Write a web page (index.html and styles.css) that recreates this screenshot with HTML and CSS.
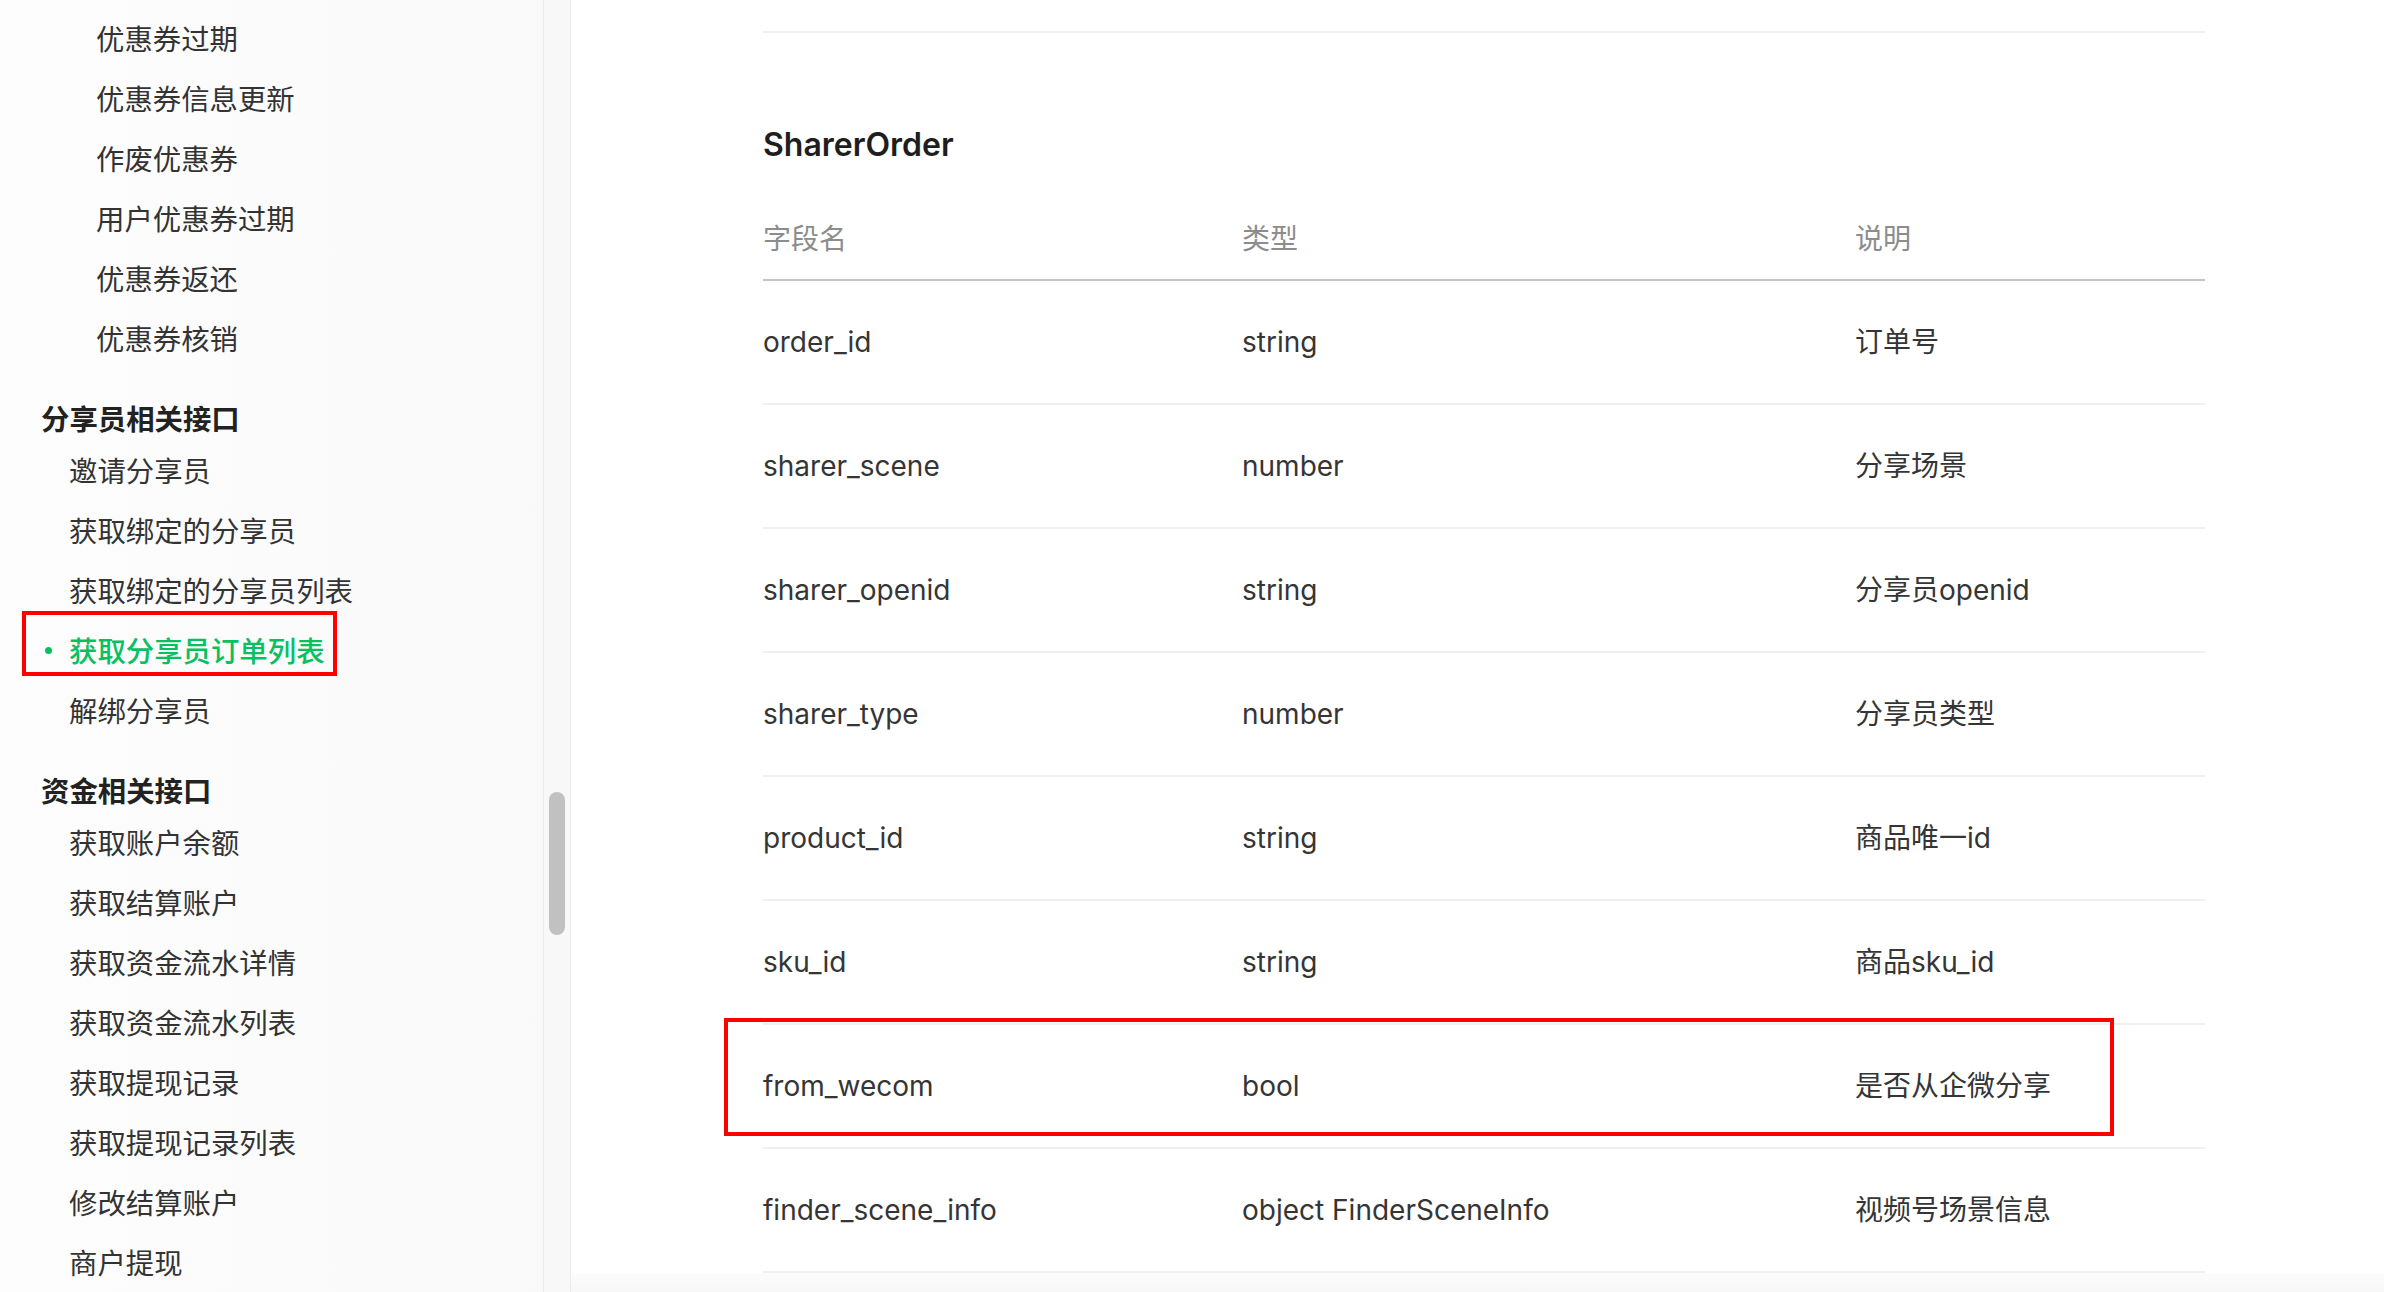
FILE: index.html
```html
<!DOCTYPE html>
<html lang="zh-CN">
<head>
<meta charset="utf-8">
<title>SharerOrder</title>
<link rel="stylesheet" href="styles.css">
</head>
<body>
<div class="page">
  <aside class="sidebar">
    <ul class="nav">
      <li class="nav-item lvl3">优惠券过期</li>
      <li class="nav-item lvl3">优惠券信息更新</li>
      <li class="nav-item lvl3">作废优惠券</li>
      <li class="nav-item lvl3">用户优惠券过期</li>
      <li class="nav-item lvl3">优惠券返还</li>
      <li class="nav-item lvl3">优惠券核销</li>
      <li class="nav-group">分享员相关接口</li>
      <li class="nav-item lvl2">邀请分享员</li>
      <li class="nav-item lvl2">获取绑定的分享员</li>
      <li class="nav-item lvl2">获取绑定的分享员列表</li>
      <li class="nav-item lvl2 active">获取分享员订单列表<span class="mark mark-nav"></span></li>
      <li class="nav-item lvl2">解绑分享员</li>
      <li class="nav-group">资金相关接口</li>
      <li class="nav-item lvl2">获取账户余额</li>
      <li class="nav-item lvl2">获取结算账户</li>
      <li class="nav-item lvl2">获取资金流水详情</li>
      <li class="nav-item lvl2">获取资金流水列表</li>
      <li class="nav-item lvl2">获取提现记录</li>
      <li class="nav-item lvl2">获取提现记录列表</li>
      <li class="nav-item lvl2">修改结算账户</li>
      <li class="nav-item lvl2">商户提现</li>
    </ul>
  </aside>
  <div class="scrolltrack"><div class="thumb"></div></div>
  <main class="main">
    <div class="content">
      <div class="prev-end"></div>
      <h3 class="title">SharerOrder</h3>
      <div class="tbl">
        <div class="tr thead">
          <div class="td">字段名</div><div class="td">类型</div><div class="td">说明</div>
        </div>
        <div class="tr"><div class="td">order_id</div><div class="td">string</div><div class="td">订单号</div></div>
        <div class="tr"><div class="td">sharer_scene</div><div class="td">number</div><div class="td">分享场景</div></div>
        <div class="tr"><div class="td">sharer_openid</div><div class="td">string</div><div class="td">分享员openid</div></div>
        <div class="tr"><div class="td">sharer_type</div><div class="td">number</div><div class="td">分享员类型</div></div>
        <div class="tr"><div class="td">product_id</div><div class="td">string</div><div class="td">商品唯一id</div></div>
        <div class="tr"><div class="td">sku_id</div><div class="td">string</div><div class="td">商品sku_id</div></div>
        <div class="tr marked"><div class="td">from_wecom</div><div class="td">bool</div><div class="td">是否从企微分享</div><span class="mark mark-row"></span></div>
        <div class="tr"><div class="td">finder_scene_info</div><div class="td">object FinderSceneInfo</div><div class="td">视频号场景信息</div></div>
      </div>
    </div>
    <div class="foot"></div>
  </main>
</div>
</body>
</html>
```
FILE: styles.css
```css
html, body {
  margin: 0;
  padding: 0;
  background: #ffffff;
}
.page {
  display: flex;
  height: 1292px;
  overflow: hidden;
}
.sidebar {
  width: 543px;
  flex: none;
  background: linear-gradient(90deg, #fdfdfd 0%, #f9f9f9 100%);
  overflow: hidden;
  font-family: "Noto Sans CJK SC", "Inter", sans-serif;
  font-size: 28.4px;
}
.nav {
  list-style: none;
  margin: 0;
  padding: 8px 0 0 0;
}
.nav-item {
  position: relative;
  line-height: 60px;
  height: 60px;
  color: #333333;
  white-space: nowrap;
}
.lvl3 { padding-left: 96px; }
.lvl2 { padding-left: 69px; }
.nav-group {
  margin-top: 28px;
  padding-left: 41px;
  line-height: 44px;
  height: 44px;
  font-weight: 700;
  color: #222222;
}
.nav-item.active {
  color: #07c160;
  font-weight: 500;
}
.nav-item.active::before {
  content: "";
  position: absolute;
  left: 45px;
  top: 27px;
  width: 7px;
  height: 7px;
  border-radius: 50%;
  background: #07c160;
}
.mark {
  position: absolute;
  border: 4px solid #ff0000;
  box-sizing: border-box;
  pointer-events: none;
}
.mark-nav {
  left: 22px;
  top: -9px;
  width: 315px;
  height: 65px;
}
.scrolltrack {
  width: 26px;
  flex: none;
  background: #f8f8f8;
  border-left: 1px solid #ebebeb;
  border-right: 1px solid #ebebeb;
  display: flex;
  justify-content: center;
}
.thumb {
  width: 16px;
  height: 143px;
  margin-top: 792px;
  border-radius: 8px;
  background: #c1c1c1;
}
.main {
  flex: 1;
  display: flex;
  flex-direction: column;
  background: #ffffff;
  font-family: "Inter", "Noto Sans CJK SC", sans-serif;
  font-size: 28px;
}
.content {
  padding-left: 192px;
  width: 1442px;
}
.prev-end {
  height: 31px;
  border-bottom: 2px solid #f0f0f0;
}
.title {
  margin: 90px 0 0 0;
  line-height: 44px;
  font-size: 32px;
  font-weight: 600;
  color: #1e1e1e;
}
.tbl {
  margin-top: 32px;
}
.tr {
  position: relative;
  display: grid;
  grid-template-columns: 479px 613px 1fr;
  border-bottom: 2px solid #f0f0f0;
}
.td {
  padding: 41px 0;
  line-height: 40px;
  color: #353535;
  white-space: nowrap;
}
.thead {
  border-bottom: 2px solid #c6c6c6;
}
.thead .td {
  padding: 20px 0 20px 0;
  color: #8c8c8c;
}
.mark-row {
  left: -39px;
  top: -7px;
  width: 1390px;
  height: 118px;
}
.foot {
  flex: 1;
  background: linear-gradient(180deg, #fcfcfc 0%, #f7f7f7 100%);
}
```
